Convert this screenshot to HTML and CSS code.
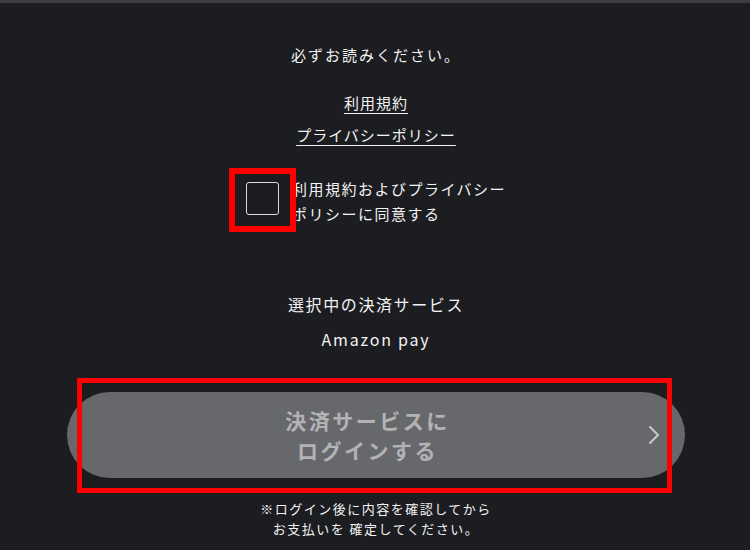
FILE: index.html
```html
<!DOCTYPE html>
<html lang="ja">
<head>
<meta charset="utf-8">
<title>決済サービスにログイン</title>
<link rel="stylesheet" href="styles.css">
</head>
<body>
<div class="topbar"></div>
<main class="main">
  <p class="notice">必ずお読みください。</p>
  <a class="doc-link first" href="#">利用規約</a>
  <a class="doc-link" href="#">プライバシーポリシー</a>
  <label class="agree">
    <span class="checkbox"><span class="mark"></span></span>
    <span class="agree-text">利用規約およびプライバシー<br>ポリシーに同意する</span>
  </label>
  <p class="service-title">選択中の決済サービス</p>
  <p class="service-name">Amazon pay</p>
  <button class="login-btn" type="button">
    <span class="spacer"></span>
    <span class="btn-text">決済サービスに<br>ログインする</span>
    <svg class="chevron" width="12" height="20" viewBox="0 0 12 20"><path d="M2 2 L10 10 L2 18" fill="none" stroke="#c9c9cb" stroke-width="2" stroke-linecap="round" stroke-linejoin="round"/></svg>
    <span class="mark wide"></span>
  </button>
  <p class="note">※ログイン後に内容を確認してから<br>お支払いを 確定してください。</p>
</main>
</body>
</html>
```

FILE: styles.css
```css
html, body {
  margin: 0;
  padding: 0;
}
body {
  background: #1c1d21;
  color: #f2f2f2;
  font-family: "Noto Sans CJK JP", "Noto Sans", sans-serif;
  width: 750px;
  height: 550px;
  overflow: hidden;
}
.topbar {
  height: 3px;
  background: #3d3e42;
}
.main {
  display: flex;
  flex-direction: column;
  align-items: center;
  padding-left: 2px;
}
.notice {
  margin: 41px 0 0;
  font-size: 15px;
  line-height: 22px;
  letter-spacing: 2px;
}
.doc-link {
  color: #f2f2f2;
  font-size: 15px;
  line-height: 22px;
  letter-spacing: 1px;
  text-decoration: underline;
  text-underline-offset: 4px;
  text-decoration-thickness: 1px;
  margin-top: 10px;
}
.doc-link.first {
  margin-top: 26px;
}
.agree {
  margin-top: 30px;
  display: flex;
  align-items: center;
  gap: 13px;
}
.checkbox {
  position: relative;
  width: 33px;
  height: 33px;
  box-sizing: border-box;
  border: 1.5px solid #dcdcdc;
  border-radius: 3px;
  margin-top: -5px;
}
.mark {
  position: absolute;
  left: -18px;
  top: -15px;
  width: 67px;
  height: 64px;
  box-sizing: border-box;
  border: 6px solid #ff0000;
}
.mark.wide {
  left: 10px;
  top: -14px;
  width: 595px;
  height: 115px;
  border-width: 5px;
}
.agree-text {
  font-size: 15px;
  line-height: 25px;
  letter-spacing: 1.5px;
}
.service-title {
  margin: 66px 0 0;
  font-size: 16px;
  line-height: 24px;
  letter-spacing: 1.6px;
}
.service-name {
  margin: 11px 0 0;
  font-size: 16px;
  line-height: 24px;
  letter-spacing: 1.8px;
}
.login-btn {
  position: relative;
  margin-top: 41px;
  width: 618px;
  height: 86px;
  border: none;
  border-radius: 43px;
  background: #67686c;
  display: grid;
  grid-template-columns: 1fr auto 1fr;
  align-items: center;
  padding: 0 25px 0 8px;
  font-family: inherit;
  cursor: pointer;
}
.btn-text {
  color: #b3b3b5;
  font-size: 21px;
  font-weight: 700;
  line-height: 30px;
  letter-spacing: 2.5px;
  text-align: center;
}
.chevron {
  justify-self: end;
}
.note {
  margin: 21px 0 0;
  font-size: 13px;
  line-height: 20px;
  letter-spacing: 1.5px;
  text-align: center;
}
```
